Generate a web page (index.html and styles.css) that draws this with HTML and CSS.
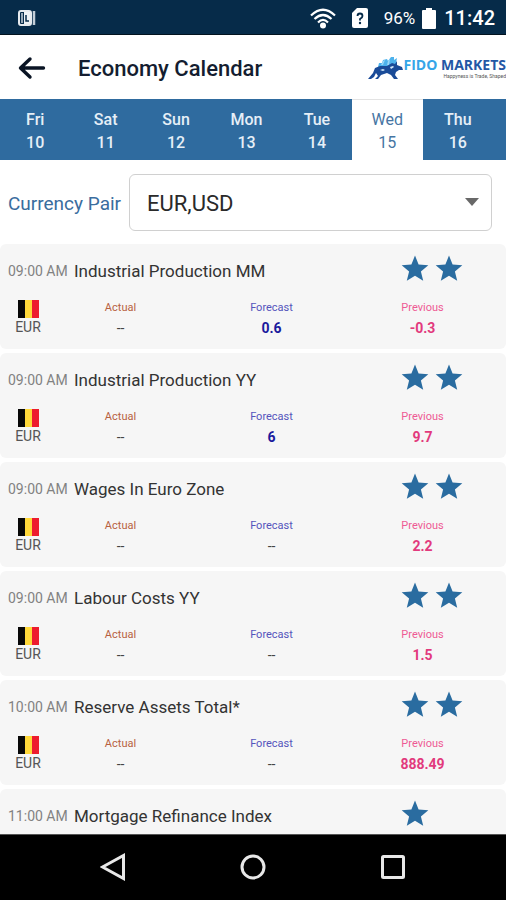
FILE: index.html
```
<!DOCTYPE html>
<html lang="en">
<head>
<meta charset="utf-8">
<meta name="viewport" content="width=device-width, initial-scale=1">
<title>Economy Calendar</title>
<link rel="stylesheet" href="styles.css">
</head>
<body>
<svg width="0" height="0" class="defs" aria-hidden="true">
  <symbol id="star" viewBox="0 0 28 28"><path d="M14 .5L17.600 9.500 27.300 10.200 19.900 16.400 22.200 25.800 14 20.700 5.800 25.800 8.100 16.400 .7 10.200 10.400 9.500z"/></symbol>
  <symbol id="flag" viewBox="0 0 21 18"><path fill="#080808" d="M0 0h7v18H0z"/><path fill="#ffd83a" d="M7 0h7v18H7z"/><path fill="#ed1c2e" d="M14 0h7v18h-7z"/></symbol>
</svg>
<div class="status">
  <svg class="status-app" width="18" height="17" viewBox="0 0 18 17"><rect x="1" y="1" width="12" height="14" rx="2" fill="#062b49" stroke="#e6ebef" stroke-width="2"/><path d="M4 3v10" stroke="#c9d3dc" stroke-width="1.500"/><path d="M6 2h6v12H6z" fill="#eef2f5"/><path d="M8 5v6h3" fill="none" stroke="#062b49" stroke-width="1.500"/><path d="M16 1v14" stroke="#c3ced8" stroke-width="2.500"/></svg>
  <div class="status-right">
    <svg width="26" height="21" viewBox="0 0 26 21" fill="none" stroke="#fff" stroke-width="2.200"><path d="M1 7.500Q13-4 25 7.500M4.500 11Q13 3 21.500 11M8 14.500Q13 9.500 18 14.500"/><circle cx="13" cy="17.500" r="3" fill="#fff" stroke="none"/></svg>
    <svg class="sim" width="16" height="20" viewBox="0 0 16 20"><path fill="#fff" d="M5 0h9q2 0 2 2v16q0 2-2 2H2q-2 0-2-2V5z"/><path d="M5.500 8q0-2.500 2.500-2.500T10.500 8Q10.500 9.500 8 11v1.500" fill="none" stroke="#062b49" stroke-width="1.800"/><circle cx="8" cy="15" r="1.200" fill="#062b49"/></svg>
    <span class="percent">96%</span>
    <svg class="battery" width="14" height="21" viewBox="0 0 14 21"><path fill="#fff" d="M4 0h6v2h3q1 0 1 1v17q0 1-1 1H1q-1 0-1-1V3q0-1 1-1h3z"/></svg>
    <span class="clock">11:42</span>
  </div>
</div>
<header class="header">
  <button class="back" aria-label="Back"><svg width="28" height="24" viewBox="0 0 28 24" fill="none" stroke="#0a1424" stroke-width="3.400" stroke-linecap="round" stroke-linejoin="round"><path d="M25.500 12H3M12 3l-9.500 9L12 21"/></svg></button>
  <h1>Economy Calendar</h1>
  <div class="logo">
    <svg width="35" height="24" viewBox="0 0 35 24"><path fill="#4db2ec" d="M10 11l1-4 3 0 1-3 4-1 1 2 3-4h3l0 3 3-2-1 5 1 3-6 3-8 0z"/><path fill="#9ad8f8" d="M15 5l2-1-2 5-2 0zM20 5l2-2-1 6-2 0z"/><path fill="#1a4b98" d="M7 12l5-2 7 0 5-3 3 1 2-3 0 4 5 2 1 3-4 0-3 2-1 3 3 4h-4l-3-4-4-2-6 2-3 4H7l3-3-2-3-2 4-3 2H0l5-6z"/><path fill="#d6ebfa" d="M12 14l3-1 2 1-2 1zM22 11l3-1 1 1-3 2z"/></svg>
    <div class="brand"><div class="brand-name"><span>FIDO</span> MARKETS</div><div class="slogan">Happyness is Trade, Shaped</div></div>
  </div>
</header>
<nav class="days" aria-label="Days">
  <a href="#">Fri<br>10</a><a href="#">Sat<br>11</a><a href="#">Sun<br>12</a><a href="#">Mon<br>13</a><a href="#">Tue<br>14</a><a href="#" class="selected" aria-current="date">Wed<br>15</a><a href="#">Thu<br>16</a>
</nav>
<div class="filter">
  <label for="pair">Currency Pair</label>
  <div class="select"><select id="pair"><option>EUR,USD</option></select><svg width="14" height="8" viewBox="0 0 14 8"><path fill="#686868" d="M0 0h14L7 8z"/></svg></div>
</div>
<main class="events">
  <article class="card">
    <div class="top"><time>09:00 AM</time><h2>Industrial Production MM</h2><div class="stars"><svg><use href="#star"/></svg><svg><use href="#star"/></svg></div></div>
    <div class="details"><div class="country"><svg><use href="#flag"/></svg>EUR</div><dl class="actual"><dt>Actual</dt><dd>--</dd></dl><dl class="forecast"><dt>Forecast</dt><dd>0.6</dd></dl><dl class="previous"><dt>Previous</dt><dd>-0.3</dd></dl></div>
  </article>
  <article class="card">
    <div class="top"><time>09:00 AM</time><h2>Industrial Production YY</h2><div class="stars"><svg><use href="#star"/></svg><svg><use href="#star"/></svg></div></div>
    <div class="details"><div class="country"><svg><use href="#flag"/></svg>EUR</div><dl class="actual"><dt>Actual</dt><dd>--</dd></dl><dl class="forecast"><dt>Forecast</dt><dd>6</dd></dl><dl class="previous"><dt>Previous</dt><dd>9.7</dd></dl></div>
  </article>
  <article class="card">
    <div class="top"><time>09:00 AM</time><h2>Wages In Euro Zone</h2><div class="stars"><svg><use href="#star"/></svg><svg><use href="#star"/></svg></div></div>
    <div class="details"><div class="country"><svg><use href="#flag"/></svg>EUR</div><dl class="actual"><dt>Actual</dt><dd>--</dd></dl><dl class="forecast empty"><dt>Forecast</dt><dd>--</dd></dl><dl class="previous"><dt>Previous</dt><dd>2.2</dd></dl></div>
  </article>
  <article class="card">
    <div class="top"><time>09:00 AM</time><h2>Labour Costs YY</h2><div class="stars"><svg><use href="#star"/></svg><svg><use href="#star"/></svg></div></div>
    <div class="details"><div class="country"><svg><use href="#flag"/></svg>EUR</div><dl class="actual"><dt>Actual</dt><dd>--</dd></dl><dl class="forecast empty"><dt>Forecast</dt><dd>--</dd></dl><dl class="previous"><dt>Previous</dt><dd>1.5</dd></dl></div>
  </article>
  <article class="card">
    <div class="top"><time>10:00 AM</time><h2>Reserve Assets Total*</h2><div class="stars"><svg><use href="#star"/></svg><svg><use href="#star"/></svg></div></div>
    <div class="details"><div class="country"><svg><use href="#flag"/></svg>EUR</div><dl class="actual"><dt>Actual</dt><dd>--</dd></dl><dl class="forecast empty"><dt>Forecast</dt><dd>--</dd></dl><dl class="previous"><dt>Previous</dt><dd>888.49</dd></dl></div>
  </article>
  <article class="card">
    <div class="top"><time>11:00 AM</time><h2>Mortgage Refinance Index</h2><div class="stars"><svg><use href="#star"/></svg></div></div>
  </article>
</main>
<nav class="system" aria-label="System">
  <button aria-label="Back"><svg width="26" height="28" viewBox="0 0 26 28"><path d="M23.500 2.500v23L2.500 14z"/></svg></button>
  <button aria-label="Home"><svg width="26" height="28" viewBox="0 0 26 28"><circle cx="13" cy="14" r="11"/></svg></button>
  <button aria-label="Recent apps"><svg width="26" height="28" viewBox="0 0 26 28"><rect x="2.500" y="3.500" width="21" height="21" rx="1"/></svg></button>
</nav>
</body>
</html>
```
FILE: styles.css
```
* { box-sizing: border-box; }
body {
  margin: 0;
  height: 100vh;
  display: flex;
  flex-direction: column;
  overflow: hidden;
  background: #fff;
  font-family: Roboto, "Liberation Sans", sans-serif;
  color: #333;
}
h1, h2, dl, dd { margin: 0; }
button { border: 0; padding: 0; background: none; }
svg { display: block; flex: none; }
.defs { position: absolute; }

.status {
  flex: none;
  height: 35px;
  display: flex;
  align-items: center;
  justify-content: space-between;
  padding: 2px 11px 0 18px;
  background: #062b49;
  border-bottom: 1px solid #03131f;
  color: #fff;
}
.status-right { display: flex; align-items: center; }
.sim { margin-left: 16px; }
.percent { margin-left: 16px; font-size: 17px; }
.battery { margin-left: 7px; }
.clock { margin-left: 8px; font-size: 20px; font-weight: 500; }

.header {
  flex: none;
  height: 64px;
  display: flex;
  align-items: center;
  padding: 2px 0 0 18px;
}
.back { flex: none; }
h1 {
  flex: 1;
  margin-left: 32px;
  font-size: 22px;
  font-weight: 500;
  color: #141d30;
}
.logo { flex: none; display: flex; align-items: center; }
.brand-name {
  font: 700 14px/16px "Open Sans", sans-serif;
  color: #2357a5;
  white-space: nowrap;
}
.brand-name span { color: #35a5e8; }
.slogan {
  font-size: 5px;
  line-height: 6px;
  text-align: right;
  color: #555;
}

.days {
  flex: none;
  display: grid;
  grid-template-columns: repeat(7, 1fr);
  height: 61px;
  padding-right: 13px;
  background: #2f6b9f;
}
.days a {
  padding-top: 9px;
  text-align: center;
  font-size: 16px;
  font-weight: 500;
  line-height: 23px;
  color: #e6eff7;
  text-decoration: none;
}
.days .selected { background: #fff; color: #4675a3; font-weight: 400; border-top: 1px solid #e3e3e3; padding-top: 8px; }

.filter {
  flex: none;
  height: 84px;
  display: flex;
  align-items: center;
  gap: 8px;
  padding: 0 14px 0 8px;
}
.filter label { padding-top: 2px; font-size: 19px; color: #3a6d9e; white-space: nowrap; }
.select { flex: 1; display: grid; align-items: center; }
.select select, .select svg { grid-area: 1 / 1; }
.select svg { justify-self: end; margin-right: 13px; pointer-events: none; }
select {
  appearance: none;
  width: 100%;
  height: 57px;
  padding: 2px 17px 0;
  border: 1px solid #d0d0d0;
  border-radius: 6px;
  background: #fff;
  font: 22px Roboto, sans-serif;
  color: #2a2a2a;
}

.events {
  flex: 1;
  min-height: 0;
  overflow: hidden;
  display: flex;
  flex-direction: column;
  gap: 4px;
  background: #fff;
}
.card {
  flex: none;
  min-height: 105px;
  border-radius: 6px;
  background: #f6f6f6;
}
.top {
  height: 54px;
  display: flex;
  align-items: center;
  padding: 0 43px 0 8px;
}
time { width: 66px; font-size: 14px; color: #828282; white-space: nowrap; }
h2 { flex: 1; font-size: 17px; font-weight: 400; color: #333; }
.stars { width: 62px; display: flex; gap: 6px; padding-bottom: 4px; }
.stars svg { width: 28px; height: 28px; fill: #2a6ca0; }
.details {
  display: grid;
  grid-template-columns: 34px repeat(3, 1fr);
  padding: 2px 8px 0 11px;
  text-align: center;
}
.country {
  display: flex;
  flex-direction: column;
  align-items: center;
  font-size: 14px;
  line-height: 19px;
  color: #555;
}
.country svg { width: 21px; height: 18px; }
dt { font-size: 11px; line-height: 16px; }
dd { margin-top: 2px; font-size: 14px; line-height: 20px; font-weight: 700; }
.actual dt { color: #b8613f; }
.actual dd, .empty dd { font-weight: 400; color: #444; }
.forecast dt { color: #5454bc; }
.forecast:not(.empty) dd { color: #1a1a9d; }
.previous dt { color: #ee5a94; }
.previous dd { color: #e23a7d; }

.system {
  flex: none;
  height: 66px;
  display: flex;
  align-items: center;
  justify-content: center;
  gap: 114px;
  padding-bottom: 2px;
  background: #000;
  border-top: 1px solid #555;
}
.system svg { fill: none; stroke: #e8e8e8; stroke-width: 3; }
```
